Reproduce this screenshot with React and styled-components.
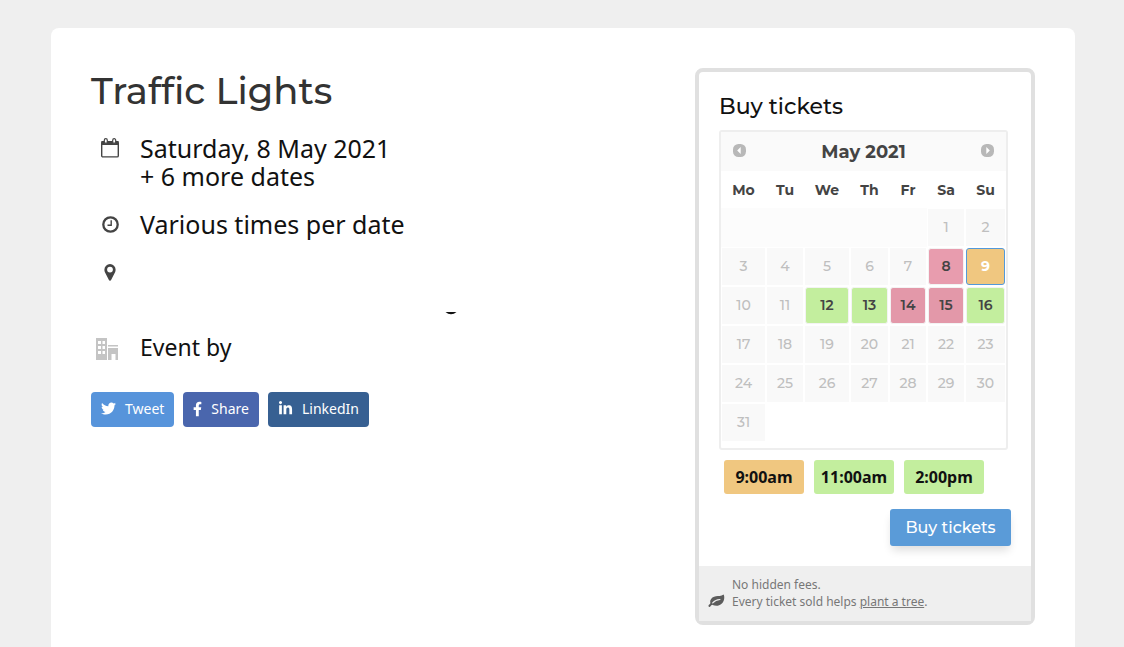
import React, { useState } from 'react';
import styled, { createGlobalStyle } from 'styled-components';
import { FaTwitter, FaLinkedinIn } from 'react-icons/fa';

const heading = `Montserrat, Inter, 'Open Sans', sans-serif`;

const GlobalStyle = createGlobalStyle`
  * {
    box-sizing: border-box;
  }

  html {
    min-height: 100%;
    background: #efefef;
  }

  body {
    margin: 0;
    color: #111;
    font-family: 'Noto Sans', sans-serif;
  }

  html, body, #root {
    height: 100%;
  }

  button {
    font-family: inherit;
    cursor: pointer;
  }
`;

const Page = styled.div`
  display: flex;
  justify-content: center;
  min-height: 100%;
  padding: 28px 49px 0 51px;
  background: #efefef;
`;

const Card = styled.main`
  display: flex;
  justify-content: space-between;
  align-items: flex-start;
  gap: 32px;
  width: 100%;
  max-width: 1024px;
  padding: 40px 40px 22px;
  border-radius: 8px 8px 0 0;
  background: #fff;
`;

const Details = styled.section`
  flex: 1;
`;

const Title = styled.h1`
  margin: 0 0 20px;
  color: #333;
  font: 500 37px/46px ${heading};
`;

const InfoList = styled.ul`
  display: flex;
  flex-direction: column;
  gap: 20px;
  margin: 0 0 29px;
  padding: 0;
  list-style: none;
`;

const InfoRow = styled.li`
  display: grid;
  grid-template-columns: 38px 1fr;
  column-gap: 11px;
  font-size: ${(props) => (props.$small ? 23 : 25)}px;
  line-height: ${(props) => (props.$small ? 24 : 28)}px;

  p {
    margin: 0;
  }
`;

const InfoIcon = styled.span`
  display: flex;
  align-items: center;
  justify-content: center;
  height: 28px;
  color: #444;
`;

const OrganiserIcon = styled(InfoIcon)`
  padding-right: 6px;
  color: #c4c4c4;
`;

const Venue = styled.div`
  display: flex;
  align-items: flex-end;
  height: 57px;
  padding-left: 305px;
`;

const ShareBar = styled.div`
  display: flex;
  gap: 9px;
`;

const ShareLink = styled.a`
  display: flex;
  align-items: center;
  gap: 9px;
  height: 35px;
  padding: 0 10px 2px;
  border-radius: 4px;
  background: ${(props) => props.$color};
  color: #fff;
  font-size: 14px;
  text-decoration: none;
`;

const Widget = styled.aside`
  flex: 0 0 340px;
  border: 4px solid #e0e0e0;
  border-radius: 8px;
  background: #fff;
`;

const WidgetBody = styled.div`
  padding: 20px;
`;

const WidgetTitle = styled.h2`
  margin: 0;
  padding: 1px 0 9px;
  font: 500 22px/28px ${heading};
`;

const Calendar = styled.div`
  width: 289px;
  padding-bottom: 6px;
  border: 2px solid #eee;
  border-radius: 3px;
  color: #444;
  font-family: ${heading};
`;

const CalendarHeader = styled.div`
  display: flex;
  align-items: center;
  justify-content: space-between;
  height: 39px;
  padding: 1px 12px 0;
  background: #fafafa;
  font-size: 18px;
  font-weight: 700;
`;

const NavButton = styled.button`
  display: flex;
  padding: 0 0 3px;
  border: 0;
  background: none;
`;

const MonthTable = styled.table`
  width: 100%;
  border-collapse: collapse;
  table-layout: fixed;

  th {
    height: 37px;
    padding: 0;
    font-size: 14px;
    font-weight: 700;
  }

  td {
    height: 39px;
    padding: 1px;
  }

  td:empty {
    background: #fcfcfc;
  }

  tr:last-child td:empty {
    background: none;
  }
`;

const Day = styled.span`
  display: flex;
  align-items: center;
  justify-content: center;
  height: 37px;
  padding-bottom: 2px;
  background: #f9f9f9;
  color: #bfbfbf;
  font-size: 14px;
  font-weight: 500;
`;

const DayButton = styled.button`
  display: block;
  width: 100%;
  height: 37px;
  padding: 0 0 2px;
  border: 1px solid ${(props) => (props.$selected ? '#5499d9' : '#f3f3f3')};
  border-radius: 3px;
  background: ${(props) => props.$color};
  color: ${(props) => (props.$selected ? '#fff' : '#444')};
  font-size: 14px;
  font-weight: ${(props) => (props.$selected ? 700 : 600)};
`;

const Times = styled.div`
  display: flex;
  gap: 10px;
  margin: 10px 5px 15px;
`;

const TimeButton = styled.button`
  width: 80px;
  height: 34px;
  padding: 0;
  border: 0;
  border-radius: 3px;
  background: ${(props) => (props.$selected ? '#f0c780' : '#c3ee9e')};
  color: #111;
  font-size: 16px;
  font-weight: 700;
`;

const Actions = styled.div`
  display: flex;
  justify-content: flex-end;
`;

const BuyButton = styled.button`
  width: 121px;
  height: 37px;
  padding: 0;
  border: 0;
  border-radius: 3px;
  background: #5a9bd8;
  box-shadow: 0 6px 10px -2px rgba(0, 0, 0, 0.14);
  color: #fff;
  && {
    font: 500 16px/37px ${heading};
  }
`;

const WidgetFooter = styled.footer`
  display: flex;
  align-items: flex-end;
  gap: 7px;
  padding: 10px 9px 11px;
  background: #efefef;
  color: #777;
  font-size: 12px;
  line-height: 17px;

  p {
    margin: 0;
  }

  a {
    color: inherit;
  }
`;

const CalendarIcon = () => (
  <svg width="18" height="20" viewBox="0 0 18 20" fill="none" stroke="currentColor" aria-hidden="true">
    <rect x="0.7" y="3.7" width="16.6" height="15.2" rx="1.2" strokeWidth="1.4" />
    <path d="M0.5 3h17v4h-17z" fill="currentColor" stroke="none" />
    <path d="M3.3 5.2V2.2a1.5 1.5 0 0 1 3 0v3zM11.7 5.2V2.2a1.5 1.5 0 0 1 3 0v3z" fill="#fff" strokeWidth="1.2" />
  </svg>
);

const ClockIcon = () => (
  <svg width="17" height="17" viewBox="0 0 17 17" fill="none" stroke="currentColor" aria-hidden="true">
    <circle cx="8.5" cy="8.5" r="7.2" strokeWidth="2.3" />
    <path d="M9.2 4.2v5H5.5" strokeWidth="1.4" />
  </svg>
);

const PinIcon = () => (
  <svg width="12" height="17" viewBox="0 0 12 17" fill="currentColor" aria-hidden="true">
    <path
      fillRule="evenodd"
      d="M6 0a5.6 5.6 0 0 1 5.6 5.6c0 .9-.1 1.6-.4 2.3L7.1 16.1a1.2 1.2 0 0 1-2.2 0L.8 7.9C.5 7.2.4 6.5.4 5.6A5.6 5.6 0 0 1 6 0zm0 2.7a2.9 2.9 0 1 0 0 5.8 2.9 2.9 0 0 0 0-5.8z"
    />
  </svg>
);

const BuildingIcon = () => (
  <svg width="22" height="22" viewBox="0 0 22 22" fill="currentColor" aria-hidden="true">
    <path
      fillRule="evenodd"
      d="M0 0h11v22H0zM2 3v3h3V3zM6.5 3v3H9V3zM2 8v3h3V8zM6.5 8v3H9V8zM2 13v3h3v-3zM6.5 13v3H9v-3z"
    />
    <path d="M12 7h10v1.5H12zM12 10h10v12h-2.5v-6h-4v6H12z" />
  </svg>
);

const FacebookIcon = () => (
  <svg width="9" height="16" viewBox="0 0 320 512" fill="currentColor" aria-hidden="true">
    <path d="M279.14 288l14.22-92.66h-88.91v-60.13c0-25.35 12.42-50.06 52.24-50.06h40.42V6.26S260.43 0 225.36 0c-73.22 0-121.08 44.38-121.08 124.72v70.62H22.89V288h81.39v224h100.17V288z" />
  </svg>
);

const LeafIcon = () => (
  <svg width="17" height="17" viewBox="0 0 17 17" aria-hidden="true">
    <path
      d="M15.6 1.6c.7 1.400.9 3.100.4 5.100-.9 3.600-3.900 6-7.400 6-1.500 0-2.800-.4-3.900-.8-.9-.3-1.600.6-2.200 1.400-.4.6-1.100.8-1.600.4-.6-.4-.6-1.100-.1-1.700.5-.6 1.300-1 1.500-1.700.2-.7-.3-1.500 0-2.700C3 5 5.400 3.500 8 3.200c2.400-.3 5 .3 7.600-1.600z"
      fill="#5c5c5c"
    />
    <path d="M4.700 9.800C6.700 7.600 8.700 6.700 11.900 6.500" fill="none" stroke="#efefef" strokeWidth="1.200" strokeLinecap="round" />
  </svg>
);

const ArrowIcon = ({ next }) => (
  <svg width="13" height="13" viewBox="0 0 13 13" aria-hidden="true">
    <rect width="13" height="13" rx="5.5" fill="#b8b8b8" />
    <path d={next ? 'M5.3 3v7l3.5-3.5z' : 'M7.7 3v7L4.2 6.5z'} fill="#fff" />
  </svg>
);

const weekdays = [
  { label: 'Mo', width: 45 },
  { label: 'Tu', width: 38 },
  { label: 'We', width: 46 },
  { label: 'Th', width: 39 },
  { label: 'Fr', width: 38 },
  { label: 'Sa', width: 38 },
  { label: 'Su', width: 41 },
];

// number of blank cells before the 1st
const offset = 5;
const weeks = Array.from({ length: 6 }, (_, week) =>
  Array.from({ length: 7 }, (_, day) => {
    const date = week * 7 + day - offset + 1;
    return date > 0 && date <= 31 ? date : null;
  })
);

const available = {
  8: '#e89cae',
  9: '#f0c780',
  12: '#c3ee9e',
  13: '#c3ee9e',
  14: '#e398a9',
  15: '#e398a9',
  16: '#c3ee9e',
};

const times = ['9:00am', '11:00am', '2:00pm'];

function DatePicker() {
  const [selected, setSelected] = useState(9);

  return (
    <Calendar>
      <CalendarHeader>
        <NavButton aria-label="Previous month">
          <ArrowIcon />
        </NavButton>
        <span>May 2021</span>
        <NavButton aria-label="Next month">
          <ArrowIcon next />
        </NavButton>
      </CalendarHeader>
      <MonthTable>
        <colgroup>
          {weekdays.map((day) => (
            <col key={day.label} width={day.width} />
          ))}
        </colgroup>
        <thead>
          <tr>
            {weekdays.map((day) => (
              <th key={day.label} scope="col">{day.label}</th>
            ))}
          </tr>
        </thead>
        <tbody>
          {weeks.map((week, i) => (
            <tr key={i}>
              {week.map((date, j) => (
                <td key={j}>
                  {date && available[date] && (
                    <DayButton
                      $color={available[date]}
                      $selected={date === selected}
                      onClick={() => setSelected(date)}
                    >
                      {date}
                    </DayButton>
                  )}
                  {date && !available[date] && <Day>{date}</Day>}
                </td>
              ))}
            </tr>
          ))}
        </tbody>
      </MonthTable>
    </Calendar>
  );
}

function TicketWidget() {
  const [time, setTime] = useState(times[0]);

  return (
    <Widget>
      <WidgetBody>
        <WidgetTitle>Buy tickets</WidgetTitle>
        <DatePicker />
        <Times>
          {times.map((t) => (
            <TimeButton key={t} $selected={t === time} onClick={() => setTime(t)}>
              {t}
            </TimeButton>
          ))}
        </Times>
        <Actions>
          <BuyButton>Buy tickets</BuyButton>
        </Actions>
      </WidgetBody>
      <WidgetFooter>
        <LeafIcon />
        <p>
          No hidden fees.
          <br />
          Every ticket sold helps <a href="#tree">plant a tree</a>.
        </p>
      </WidgetFooter>
    </Widget>
  );
}

function App() {
  return (
    <Page>
      <GlobalStyle />
      <Card>
        <Details>
          <Title>Traffic Lights</Title>
          <InfoList>
            <InfoRow>
              <InfoIcon><CalendarIcon /></InfoIcon>
              <div>
                <p>Saturday, 8 May 2021</p>
                <p>+ 6 more dates</p>
              </div>
            </InfoRow>
            <InfoRow>
              <InfoIcon><ClockIcon /></InfoIcon>
              <p>Various times per date</p>
            </InfoRow>
            <InfoRow>
              <InfoIcon><PinIcon /></InfoIcon>
              <Venue>
                <svg width="12" height="3" viewBox="0 0 12 3" aria-hidden="true">
                  <path d="M0.5 0h11Q9 2.2 6 2.2T0.5 0z" fill="#111" />
                </svg>
              </Venue>
            </InfoRow>
            <InfoRow $small>
              <OrganiserIcon><BuildingIcon /></OrganiserIcon>
              <p>Event by</p>
            </InfoRow>
          </InfoList>
          <ShareBar>
            <ShareLink href="#tweet" $color="#5794db">
              <FaTwitter size={15} /> Tweet
            </ShareLink>
            <ShareLink href="#share" $color="#4a66ad">
              <FacebookIcon /> Share
            </ShareLink>
            <ShareLink href="#linkedin" $color="#376092">
              <FaLinkedinIn size={15} /> LinkedIn
            </ShareLink>
          </ShareBar>
        </Details>
        <TicketWidget />
      </Card>
    </Page>
  );
}

export default App;
